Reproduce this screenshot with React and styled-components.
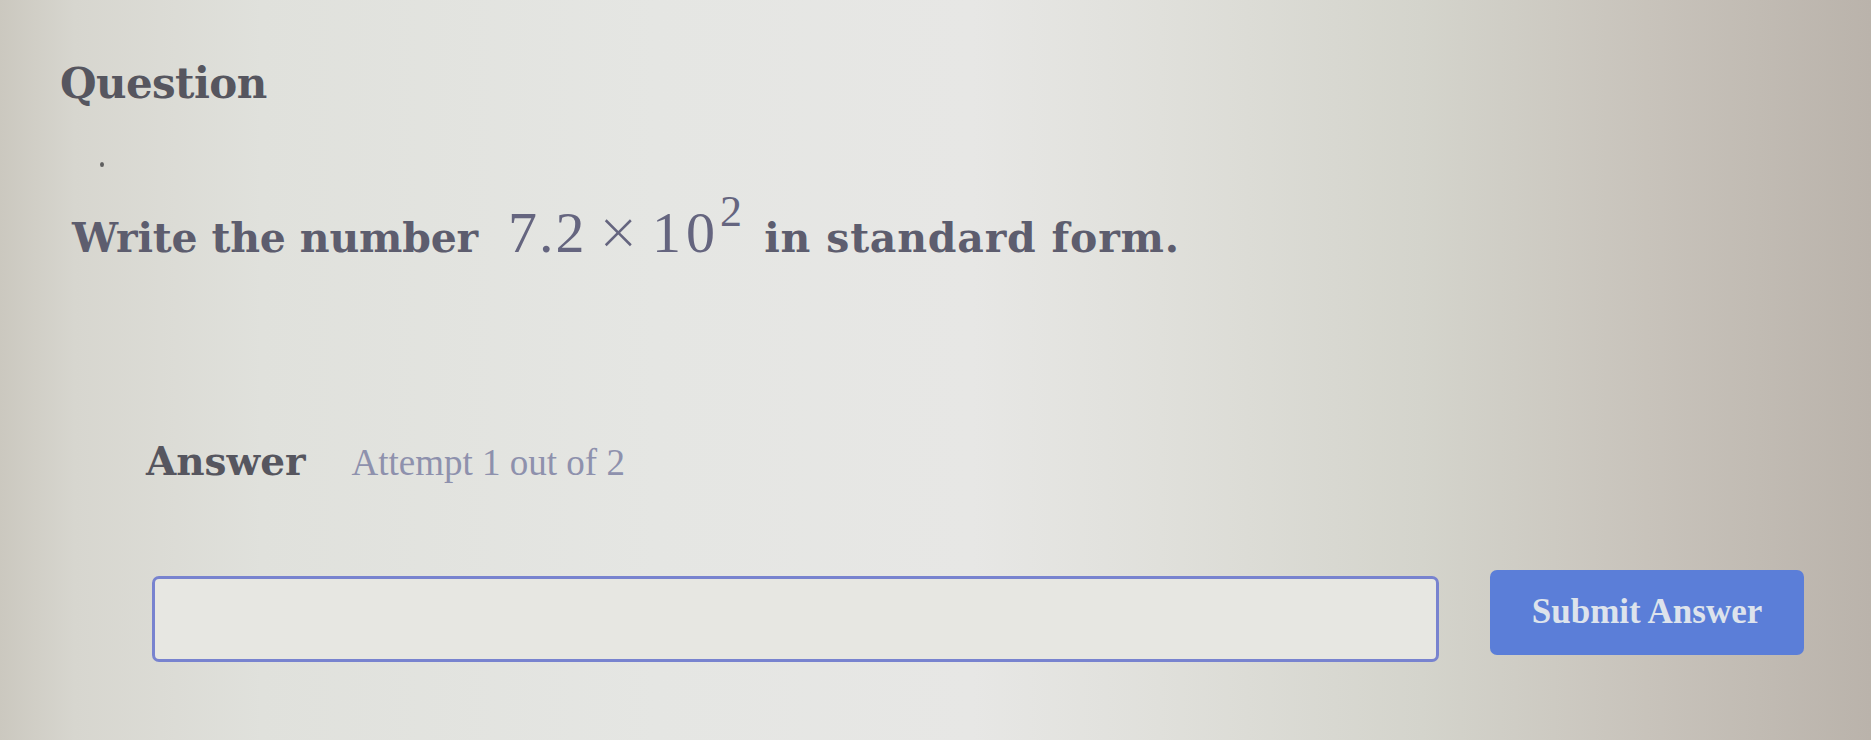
import React from "react";
import styled, { createGlobalStyle } from "styled-components";

const GlobalStyle = createGlobalStyle`
  html, body {
    margin: 0;
    padding: 0;
    width: 100%;
    height: 100%;
  }
  body {
    font-family: "DejaVu Serif", "Liberation Serif", serif;
  }
`;

const App = () => {
  return (
    <Page>
      <GlobalStyle />
      <QuestionTitle>Question</QuestionTitle>
      <Speck />
      <Prompt>
        Write the number{" "}
        <MathText>
          7.2<Times>×</Times>
          <Power>10</Power>
          <Sup>2</Sup>
        </MathText>{" "}
        <PromptTail>in standard form.</PromptTail>
      </Prompt>
      <AnswerSection>
        <AnswerHeader>
          <AnswerLabel>Answer</AnswerLabel>
          <AttemptText>Attempt 1 out of 2</AttemptText>
        </AnswerHeader>
        <AnswerRow>
          <AnswerInput type="text" aria-label="answer" />
          <SubmitButton>Submit Answer</SubmitButton>
        </AnswerRow>
      </AnswerSection>
    </Page>
  );
};

export default App;

const Page = styled.div`
  width: 1871px;
  height: 740px;
  box-sizing: border-box;
  padding: 58px 0px 0px 60px;
  display: flex;
  flex-direction: column;
  overflow: hidden;
  background: linear-gradient(
    90deg,
    #cbc8bf 0%,
    #d7d6cf 4%,
    #e0e1dc 14%,
    #e5e6e3 35%,
    #e7e7e5 52%,
    #e0e0db 62%,
    #d4d4cc 76%,
    #c8c3bb 88%,
    #bab3ab 100%
  );
`;

const QuestionTitle = styled.div`
  font-family: "DejaVu Serif", serif;
  font-weight: 700;
  font-size: 42px;
  line-height: 52px;
  color: #56565f;
  letter-spacing: -0.6px;
`;

const Speck = styled.div`
  width: 4px;
  height: 5px;
  border-radius: 50%;
  background-color: #5f5f5f;
  margin: 52px 0px 0px 40px;
`;

const Prompt = styled.div`
  margin: 38px 0px 0px 12px;
  font-family: "DejaVu Serif", serif;
  font-weight: 700;
  font-size: 41px;
  line-height: 56px;
  color: #5d5d6e;
  letter-spacing: -0.2px;
  white-space: nowrap;
`;

const PromptTail = styled.span`
  letter-spacing: 0.8px;
`;

const MathText = styled.span`
  font-family: "Liberation Serif", serif;
  font-weight: 400;
  font-size: 58px;
  color: #65657f;
  letter-spacing: 2px;
  margin: 0px 4px 0px 16px;
`;

const Times = styled.span`
  font-family: "DejaVu Sans", sans-serif;
  font-weight: 300;
  font-size: 52px;
  margin: 0px 10px 0px 10px;
  position: relative;
  top: -3px;
`;

const Power = styled.span`
  letter-spacing: 5px;
`;

const Sup = styled.sup`
  font-size: 44px;
  vertical-align: 0;
  position: relative;
  top: -26px;
  margin: 0px 2px 0px 0px;
`;

const AnswerSection = styled.div`
  margin: 172px 0px 0px 86px;
  display: flex;
  flex-direction: column;
`;

const AnswerHeader = styled.div`
  display: flex;
  align-items: baseline;
  gap: 46px;
`;

const AnswerLabel = styled.div`
  font-family: "DejaVu Serif", serif;
  font-weight: 700;
  font-size: 39px;
  color: #56565f;
  letter-spacing: 0px;
`;

const AttemptText = styled.div`
  font-family: "Liberation Serif", serif;
  font-size: 37px;
  color: #8e91ad;
`;

const AnswerRow = styled.div`
  margin: 92px 0px 0px 6px;
  display: flex;
  align-items: center;
  gap: 51px;
`;

const AnswerInput = styled.input`
  width: 1287px;
  height: 86px;
  box-sizing: border-box;
  border: 3px solid #7883cf;
  border-radius: 7px;
  background-color: #e7e7e2;
  outline: none;
  font-size: 32px;
  padding: 0px 16px;
`;

const SubmitButton = styled.button`
  width: 314px;
  height: 85px;
  margin-top: -14px;
  border: none;
  border-radius: 7px;
  background-color: #5b7ed8;
  color: #dde3ec;
  font-family: "Liberation Serif", serif;
  font-weight: 700;
  font-size: 35px;
  cursor: pointer;
`;
